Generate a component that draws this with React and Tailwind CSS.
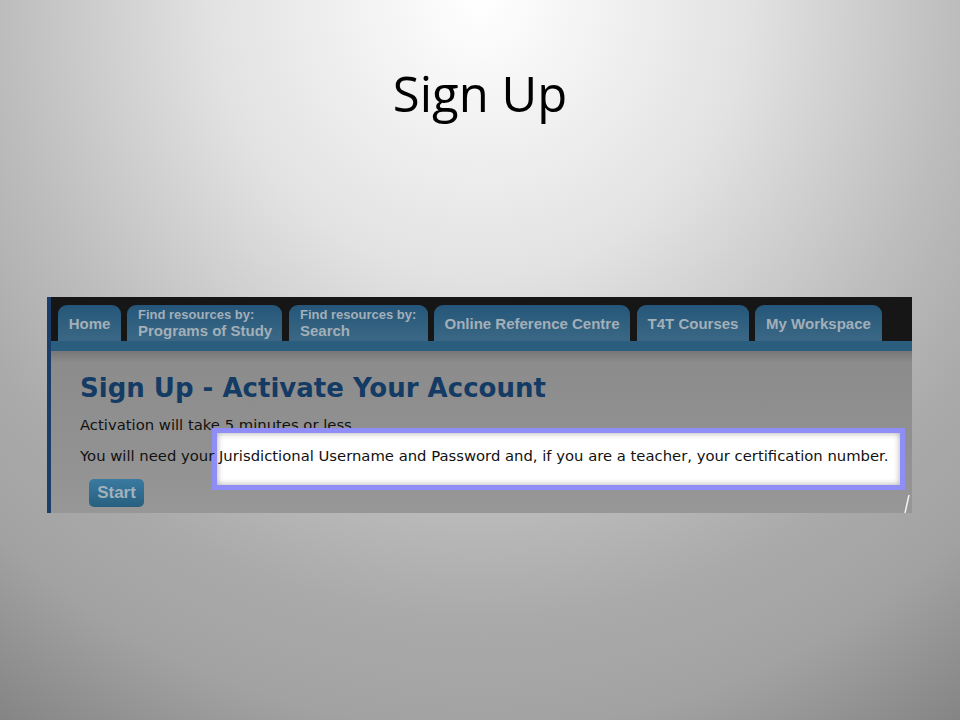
import React from "react";

const tabs = [
  { w: "w-[63px]", m: "", one: "Home" },
  { w: "w-[155px]", m: "ml-[6px]", small: "Find resources by:", big: "Programs of Study" },
  { w: "w-[139px]", m: "ml-[7px]", small: "Find resources by:", big: "Search" },
  { w: "w-[196px]", m: "ml-[6px]", one: "Online Reference Centre" },
  { w: "w-[112px]", m: "ml-[7px]", one: "T4T Courses" },
  { w: "w-[127px]", m: "ml-[6px]", one: "My Workspace" },
];

function Tab({ t }) {
  return (
    <div
      className={`${t.w} ${t.m} h-[36px] shrink-0 rounded-t-[9px] bg-[linear-gradient(180deg,#25567a_0%,#30607f_50%,#3b6785_100%)] text-[#a3afb9] font-bold flex flex-col justify-center ${t.one ? "items-center" : "items-start pl-[11px]"}`}
      style={{ fontFamily: '"Liberation Sans", Arial, sans-serif' }}
    >
      {t.one ? (
        <span className="text-[15px] leading-none">{t.one}</span>
      ) : (
        <>
          <span className="text-[13px] leading-[15px] -mt-[1px]">{t.small}</span>
          <span className="text-[15px] leading-[17px]">{t.big}</span>
        </>
      )}
    </div>
  );
}

export default function App() {
  return (
    <div className="w-[960px] h-[720px] overflow-hidden bg-[radial-gradient(ellipse_80%_110%_at_50%_0%,#ffffff_0%,#e2e2e2_35%,#bdbdbd_62%,#aaaaaa_78%,#a2a2a2_92%,#858585_110%)] flex flex-col">
      <div
        className="h-[297px] pt-[58px] text-center text-black text-[49px] leading-[70px]"
        style={{ fontFamily: '"Open Sans", "Noto Sans", sans-serif' }}
      >
        Sign Up
      </div>
      <div className="ml-[47px] w-[865px] h-[216px] flex bg-[#8f8f8f] relative">
        <div className="w-[4px] bg-[#1b3d6a] shrink-0" />
        <div className="flex-1 flex flex-col min-w-0">
          <div className="h-[44px] bg-[#161616] flex items-end pl-[7px]">
            {tabs.map((t, i) => (
              <Tab key={i} t={t} />
            ))}
          </div>
          <div className="h-[10px] bg-[#2a5d7e]" />
          <div
            className="flex-1 relative bg-[linear-gradient(180deg,#777777_0%,#8c8c8c_7%,#919191_60%,#979797_100%)] pl-[29px] pt-[22px]"
            style={{ fontFamily: '"DejaVu Sans", Verdana, sans-serif' }}
          >
            <div className="absolute left-[161px] top-[77px] w-[693px] h-[62px] border-[5px] border-[#8e8ef6] bg-white shadow-[inset_0_0_6px_rgba(0,0,0,0.35)]" />
            <h1 className="text-[26px] font-bold leading-[30px] text-[#133b64]">
              Sign Up - Activate Your Account
            </h1>
            <p className="mt-[13px] text-[14.8px] leading-[18px] text-[#111]">
              Activation will take 5 minutes or less.
            </p>
            <p className="relative z-10 mt-[13px] text-[14.8px] leading-[18px] text-[#111]">
              You will need your Jurisdictional Username and Password and, if you are a teacher, your certification number.
            </p>
            <div
              className="mt-[14px] ml-[9px] w-[55px] h-[28px] rounded-[5px] bg-[linear-gradient(180deg,#3a7aa1_0%,#27607f_100%)] text-[#a3b1bb] font-bold text-[17px] flex items-center justify-center"
              style={{ fontFamily: '"Liberation Sans", Arial, sans-serif' }}
            >
              Start
            </div>
            <svg className="absolute right-[2px] bottom-0" width="6" height="18" viewBox="0 0 6 18">
              <line x1="5" y1="0" x2="1" y2="18" stroke="#f4f4f4" strokeWidth="1.5" />
            </svg>
          </div>
        </div>
      </div>
    </div>
  );
}
